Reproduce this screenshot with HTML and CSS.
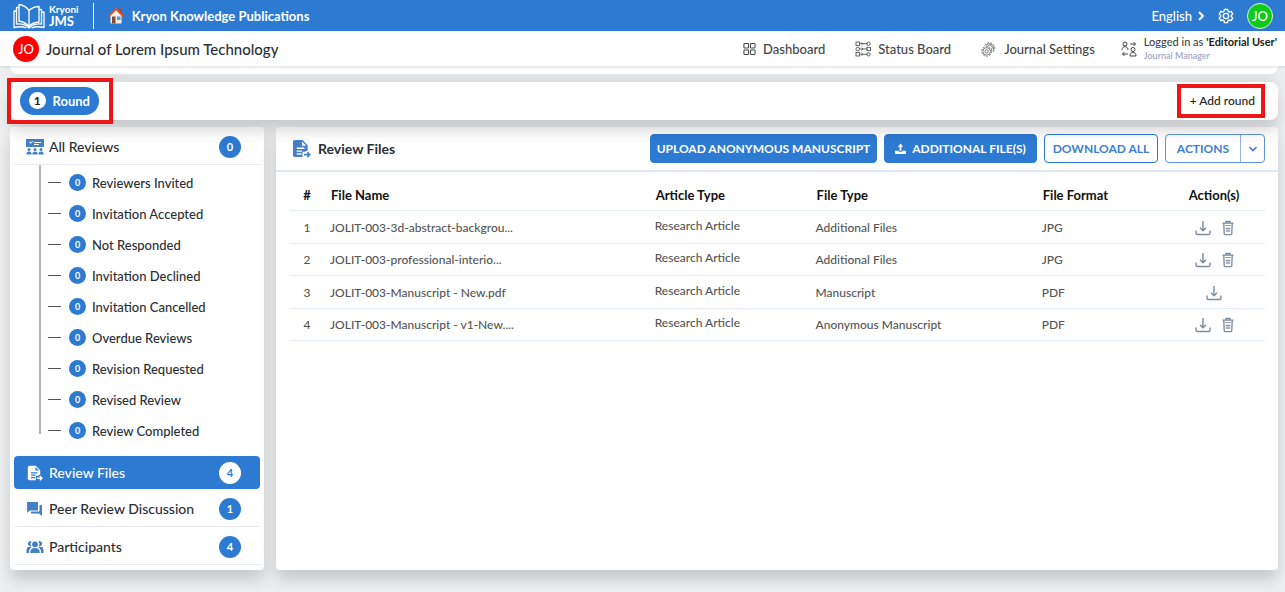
FILE: index.html
```html
<!DOCTYPE html>
<html lang="en">
<head>
<meta charset="utf-8">
<meta name="viewport" content="width=device-width, initial-scale=1">
<title>Journal of Lorem Ipsum Technology</title>
<link rel="stylesheet" href="styles.css">
</head>
<body>
<svg class="defs" aria-hidden="true">
  <symbol id="file" viewBox="0 0 20 20"><path fill="currentColor" fill-rule="evenodd" d="M3 1h8l5.500 5.500V12l-3 1.500H11V19H3a2 2 0 0 1-2-2V3a2 2 0 0 1 2-2zM10.500 2.500V7H15zM5 9v1.500h8V9zM5 12v1.500h5.500V12zM5 15v1.500h5V15z"/><path d="M12.500 16.500h5.500M16 13.800l2.700 2.700-2.700 2.700" fill="none" stroke="currentColor" stroke-width="1.700"/></symbol>
  <symbol id="download" viewBox="0 0 16 16"><path d="M8 1v9.500M5 7.800l3 3 3-3M1 10.500V13a1.500 1.500 0 0 0 1.500 1.500h11A1.500 1.500 0 0 0 15 13v-2.500" fill="none" stroke="currentColor" stroke-width="1.400"/></symbol>
  <symbol id="trash" viewBox="0 0 12 16"><path d="M.5 3.200h11M4 2.800V1.500h4v1.300M1.800 3.500l.4 10a1.200 1.200 0 0 0 1.200 1.200h5.200a1.200 1.200 0 0 0 1.200-1.200l.4-10" fill="none" stroke="currentColor" stroke-width="1.300"/><path d="M3 5.500h6M3.500 8.500h5M3.500 11h5M5 7.500v4.500M7 7.500v4.500" fill="none" stroke="currentColor" stroke-width=".8"/></symbol>
  <symbol id="gear" viewBox="0 0 24 24"><path d="M9.600 2h4.800l.7 3 1.700 1 3-.9 2.300 4.100-2.200 2.100v1.400l2.200 2.100-2.300 4.100-3-.9-1.700 1-.7 3H9.600l-.7-3-1.700-1-3 .9-2.300-4.100 2.200-2.100v-1.400L1.900 9.200l2.300-4.100 3 .9 1.700-1z" fill="none" stroke="currentColor" stroke-linejoin="round"/><circle cx="12" cy="12" r="4" fill="none" stroke="currentColor"/></symbol>
</svg>

<header class="topbar">
  <a class="brand" href="#">
    <svg class="book" viewBox="0 0 32 26" aria-hidden="true"><g fill="none" stroke="#fff" stroke-width="1.300" stroke-linejoin="round"><path d="M16 23.500V7.500C13.500 4 10 2 6 1.500V18c4 .8 7.500 2.500 10 5.500zM16 7.500C18.500 5 22 3.700 26 3.500V19c-4 .2-7.500 1.500-10 4.500"/><path d="M6 4.500H3.500V21c5-.3 9.500.8 12.500 4 3-3.200 7.500-4.300 12.500-4V6.500H26M3.500 8H1v16.500c5-1.200 9-1 12.500.5M28.500 9H31v15.500c-5-1.200-9-1-12.500.5"/></g></svg>
    <span class="brand-text"><span class="brand-top">Kryoni</span><span class="brand-bottom">JMS</span></span>
  </a>
  <a class="publisher" href="#">
    <svg class="house" viewBox="0 0 16 17" aria-hidden="true"><path fill="#f4f1ee" d="M2.500 8L8 2.800 13.500 8v8.500h-11z"/><path fill="#8a4b32" d="M4 9.500h3.500v7H4z"/><path fill="#4b9bd8" d="M9 9.500h3.500v3.500H9z"/><path fill="#a34527" d="M11.500 1.500h2V6h-2z"/><path d="M1.200 8.800L8 1.900l6.800 6.900" fill="none" stroke="#ea4d1e" stroke-width="2" stroke-linecap="round" stroke-linejoin="round"/></svg>
    Kryon Knowledge Publications
  </a>
  <div class="top-actions">
    <button class="language" type="button">English <svg viewBox="0 0 8 10" aria-hidden="true"><path d="M2 1l4 4-4 4" fill="none" stroke="currentColor" stroke-width="2"/></svg></button>
    <button class="plain settings" type="button" aria-label="Settings"><svg><use href="#gear"/></svg></button>
    <button class="avatar avatar-user" type="button">JO</button>
  </div>
</header>

<nav class="subbar">
  <span class="avatar avatar-journal">JO</span>
  <h1 class="journal">Journal of Lorem Ipsum Technology</h1>
  <div class="menu">
    <a href="#"><svg class="ic-dash" viewBox="0 0 14 14" aria-hidden="true"><g fill="none" stroke="currentColor" stroke-width="1.100"><rect x="1" y="1" width="5" height="5" rx="1"/><rect x="8" y="1" width="5" height="5" rx="1"/><rect x="1" y="8" width="5" height="5" rx="1"/><rect x="8" y="8" width="5" height="5" rx="1"/></g></svg>Dashboard</a>
    <a href="#"><svg class="ic-board" viewBox="0 0 16 16" aria-hidden="true"><g fill="none" stroke="currentColor" stroke-width=".8"><rect x="1" y="1" width="3.500" height="3.500"/><circle cx="2.700" cy="8" r="1.800"/><rect x="1" y="11.500" width="3.500" height="3.500"/><path d="M4.500 2.700h8M4.500 8h8M4.500 13.300h8M6.500 1.500l1.500 1.200-1.500 1.200M6.500 6.800L8 8 6.500 9.200M6.500 12.100L8 13.300l-1.500 1.200"/><circle cx="13.500" cy="2.700" r="1.700"/><rect x="12" y="6.300" width="3.400" height="3.400"/><circle cx="13.500" cy="13.300" r="1.700"/></g></svg>Status Board</a>
    <a href="#"><svg class="ic-gears" viewBox="0 0 34 34" aria-hidden="true"><g fill="none" stroke="currentColor" stroke-width="1.500"><circle cx="12" cy="22" r="8"/><circle cx="12" cy="22" r="3.500"/><circle cx="12" cy="22" r="10.500" stroke-dasharray="4 2.600"/><path d="M10.500 9.500A9 9 0 1 1 25 20.500M14 10.500a5.500 5.500 0 1 1 8.500 7"/><path d="M8 9A11.500 11.500 0 1 1 25 24" stroke-dasharray="4 2.600"/></g></svg>Journal Settings</a>
    <a class="who" href="#"><svg class="ic-swap" viewBox="0 0 16 16" aria-hidden="true"><g fill="none" stroke="currentColor" stroke-width="1"><circle cx="4" cy="3" r="2"/><path d="M1 9c0-4.500 6-4.500 6 0"/><circle cx="12" cy="8.500" r="2"/><path d="M9 15c0-5 6-5 6 0zM9 3h5.500M12.500 1l2 2-2 2M7 13H1.500M3.500 11l-2 2 2 2"/></g></svg><span class="who-text"><span>Logged in as <b>'Editorial User'</b></span><small>Journal Manager</small></span></a>
  </div>
</nav>

<main class="page">
  <div class="card strip"></div>
  <section class="card rounds">
    <div class="mark mark-round"><button class="round" type="button"><span class="round-no">1</span>Round</button></div>
    <div class="mark mark-add"><button class="plain add" type="button">+ Add round</button></div>
  </section>

  <div class="columns">
    <aside class="card side">
      <a class="side-row" href="#"><svg class="side-icon" viewBox="0 0 18 16" aria-hidden="true"><g fill="currentColor"><path fill-rule="evenodd" d="M0 0h18v8H0zM3 3l1.500 1.700L7 2.500l-.6-.6-1.900 1.700-.8-1zM8 3v1h7V3zM8 5v1h5V5z"/><circle cx="3" cy="10.500" r="1.500"/><circle cx="9" cy="10.500" r="1.500"/><circle cx="15" cy="10.500" r="1.500"/><path d="M.3 15.500q0-3 2.700-3t2.700 3zM6.300 15.500q0-3 2.700-3t2.700 3zM12.300 15.500q0-3 2.700-3t2.700 3z"/></g></svg>All Reviews<span class="badge">0</span></a>
      <ul class="tree">
        <li><a href="#"><span class="dot">0</span>Reviewers Invited</a></li>
        <li><a href="#"><span class="dot">0</span>Invitation Accepted</a></li>
        <li><a href="#"><span class="dot">0</span>Not Responded</a></li>
        <li><a href="#"><span class="dot">0</span>Invitation Declined</a></li>
        <li><a href="#"><span class="dot">0</span>Invitation Cancelled</a></li>
        <li><a href="#"><span class="dot">0</span>Overdue Reviews</a></li>
        <li><a href="#"><span class="dot">0</span>Revision Requested</a></li>
        <li><a href="#"><span class="dot">0</span>Revised Review</a></li>
        <li><a href="#"><span class="dot">0</span>Review Completed</a></li>
      </ul>
      <a class="side-row active" href="#"><svg class="side-icon" aria-hidden="true"><use href="#file"/></svg>Review Files<span class="badge">4</span></a>
      <a class="side-row" href="#"><svg class="side-icon" viewBox="0 0 18 16" aria-hidden="true"><path fill="currentColor" d="M1 1h11v8.500H4L1.200 12zM13.500 4H16v11l-3-2.500H5v-2h8.500z"/></svg>Peer Review Discussion<span class="badge">1</span></a>
      <a class="side-row" href="#"><svg class="side-icon" viewBox="0 0 18 16" aria-hidden="true"><g fill="currentColor"><circle cx="9" cy="5.300" r="2.900"/><path d="M4.200 14q0-5 4.800-5t4.800 5z"/><path d="M5.500 2.200a2.700 2.700 0 1 0-.2 5.100 4.500 4.500 0 0 1 .2-5.100zM12.500 2.200a2.700 2.700 0 1 1 .2 5.100 4.500 4.500 0 0 0-.2-5.100zM1.500 8H5.500q-2.500 2-2.500 6H.5q-.2-4 1-6zM16.500 8h-4q2.500 2 2.500 6h2.500q.2-4-1-6z"/></g></svg>Participants<span class="badge">4</span></a>
    </aside>

    <section class="card files">
      <div class="files-head">
        <svg class="title-icon" aria-hidden="true"><use href="#file"/></svg>
        <h2>Review Files</h2>
        <div class="buttons">
          <button class="btn solid upload" type="button">UPLOAD ANONYMOUS MANUSCRIPT</button>
          <button class="btn solid additional" type="button"><svg viewBox="0 0 12 12" aria-hidden="true"><path fill="currentColor" d="M6 0l3 3.500H7V8H5V3.500H3zM0 8h4v1h4V8h4v3.500H0z"/></svg>ADDITIONAL FILE(S)</button>
          <button class="btn outline download" type="button">DOWNLOAD ALL</button>
          <div class="split">
            <button type="button">ACTIONS</button>
            <button class="caret" type="button" aria-label="More actions"><svg viewBox="0 0 10 8" aria-hidden="true"><path d="M1.500 2L5 5.500 8.500 2" fill="none" stroke="currentColor" stroke-width="1.600"/></svg></button>
          </div>
        </div>
      </div>
      <table>
        <colgroup><col class="c-no"><col class="c-name"><col class="c-article"><col class="c-type"><col class="c-format"><col class="c-act"></colgroup>
        <thead><tr><th class="mid">#</th><th>File Name</th><th>Article Type</th><th>File Type</th><th>File Format</th><th class="mid">Action(s)</th></tr></thead>
        <tbody>
          <tr><td class="mid">1</td><td>JOLIT-003-3d-abstract-backgrou...</td><td class="article">Research Article</td><td>Additional Files</td><td>JPG</td><td><div class="acts"><button class="plain" type="button" aria-label="Download"><svg class="dl"><use href="#download"/></svg></button><button class="plain" type="button" aria-label="Delete"><svg class="bin"><use href="#trash"/></svg></button></div></td></tr>
          <tr><td class="mid">2</td><td>JOLIT-003-professional-interio...</td><td class="article">Research Article</td><td>Additional Files</td><td>JPG</td><td><div class="acts"><button class="plain" type="button" aria-label="Download"><svg class="dl"><use href="#download"/></svg></button><button class="plain" type="button" aria-label="Delete"><svg class="bin"><use href="#trash"/></svg></button></div></td></tr>
          <tr><td class="mid">3</td><td>JOLIT-003-Manuscript - New.pdf</td><td class="article">Research Article</td><td>Manuscript</td><td>PDF</td><td><div class="acts"><button class="plain" type="button" aria-label="Download"><svg class="dl"><use href="#download"/></svg></button></div></td></tr>
          <tr><td class="mid">4</td><td>JOLIT-003-Manuscript - v1-New....</td><td class="article">Research Article</td><td>Anonymous Manuscript</td><td>PDF</td><td><div class="acts"><button class="plain" type="button" aria-label="Download"><svg class="dl"><use href="#download"/></svg></button><button class="plain" type="button" aria-label="Delete"><svg class="bin"><use href="#trash"/></svg></button></div></td></tr>
        </tbody>
      </table>
    </section>
  </div>
</main>
</body>
</html>
```
FILE: styles.css
```css
:root { --blue: #2d7ad3; --ink: #2b3035; --line: #e4eaf3; }
* { box-sizing: border-box; }
body { margin: 0; min-height: 100vh; display: flex; flex-direction: column; background: #eff0f2; color: var(--ink); font: 500 13px/18px Lato, sans-serif; }
button { font: inherit; color: inherit; cursor: pointer; }
a { color: inherit; text-decoration: none; }
h1, h2, ul { margin: 0; padding: 0; }
svg { display: block; flex: none; }
.defs { position: absolute; width: 0; height: 0; }
.plain { border: 0; padding: 0; background: none; }

.topbar { display: flex; align-items: center; height: 31px; padding: 0 12px 0 13px; background: var(--blue); color: #fff; }
.brand { display: flex; align-items: center; gap: 4px; padding-right: 14px; border-right: 1px solid #fff; height: 26px; }
.book { width: 32px; height: 26px; }
.brand-text { display: flex; flex-direction: column; font-weight: 700; }
.brand-top { font-size: 10px; line-height: 11px; }
.brand-bottom { font-size: 13px; line-height: 13px; }
.publisher { display: flex; align-items: center; gap: 8px; margin-left: 14px; font-size: 13px; font-weight: 700; }
.house { width: 16px; height: 17px; }
.top-actions { display: flex; align-items: center; margin-left: auto; }
.language { display: flex; align-items: center; gap: 5px; border: 0; padding: 0; background: none; font-size: 13px; }
.language svg { width: 8px; height: 10px; }
.settings { margin: 0 13px; }
.settings svg { width: 16px; height: 16px; stroke-width: 2; }
.avatar { display: grid; place-items: center; width: 26px; height: 26px; border-radius: 50%; color: #fff; font-size: 13px; line-height: 18px; padding: 0; }
.avatar-user { border: 1px solid #dff5df; background: #0fca16; }
.avatar-journal { background: #f00; }

.subbar { position: relative; z-index: 2; display: flex; align-items: center; height: 35px; padding: 0 8px 0 13px; background: #fff; box-shadow: 0 1px 3px #0002; }
.journal { margin-left: 7px; font-size: 15px; font-weight: 500; }
.menu { display: flex; align-items: center; margin-left: auto; color: #444; }
.menu a { display: flex; align-items: center; gap: 7px; margin-left: 30px; }
.menu .who { gap: 7px; margin-left: 26px; }
.ic-dash { width: 13px; height: 14px; }
.ic-board, .ic-gears, .ic-swap { width: 16px; height: 16px; }
.who-text { display: flex; flex-direction: column; font-size: 11px; line-height: 14px; }
.who b { color: #222; }
.who small { color: #9aa2b8; font-size: 9px; line-height: 13px; }

.page { flex: 1; display: flex; flex-direction: column; padding: 0 7px 23px 10px; }
.card { background: #fff; box-shadow: 0 10px 16px #0000002b; }
.strip { height: 8px; border-radius: 0 0 12px 12px; }
.rounds { position: relative; z-index: 1; display: flex; justify-content: space-between; align-items: center; height: 38px; margin: 8px 0 7px; padding: 0 13px 0 0; border-radius: 8px; }
.mark { border: 4px solid #ed1616; }
.mark-round { margin: -5px 0 -4px -3px; padding: 5px 10px 5px 9px; }
.mark-add { padding: 3px 6px 4px 9px; }
.round { display: flex; align-items: center; gap: 7px; width: 79px; height: 28px; padding: 0 9px; border: 0; border-radius: 14px; background: var(--blue); color: #fff; font-weight: 700; }
.round-no { display: grid; place-items: center; width: 17px; height: 17px; border-radius: 50%; background: #fff; color: #222; font-size: 12px; }
.add { color: #222; font-size: 12px; }

.columns { flex: 1; display: grid; grid-template-columns: 254px 1fr; gap: 12px; }
.side { padding: 0 4px 5px; border-radius: 4px; }
.side-row { display: flex; align-items: center; gap: 5px; height: 38px; padding: 2px 19px 0 12px; border-bottom: 1px solid #eaecef; font-size: 14px; }
.side-icon { width: 18px; height: 16px; color: #4580c7; }
.side-row.active { height: 33px; margin-top: 10px; padding-top: 0; border: 0; border-radius: 4px; background: var(--blue); color: #fff; }
.active .side-icon { color: #fff; }
.badge { display: grid; place-items: center; width: 22px; height: 22px; margin-left: auto; border-radius: 50%; background: var(--blue); color: #fff; font-size: 11px; font-weight: 700; }
.active .badge { background: #fff; color: var(--blue); }
.tree { list-style: none; margin-left: 25px; padding-top: 2px; background: linear-gradient(#b5b5b5, #b5b5b5) 0 0 / 2px calc(100% - 12px) no-repeat; }
.tree a { display: flex; align-items: center; height: 31px; padding-left: 9px; }
.tree a::before { content: ""; width: 13px; height: 1px; margin-right: 8px; background: #555; }
.dot { display: grid; place-items: center; width: 17px; height: 17px; margin-right: 6px; border-radius: 50%; background: var(--blue); color: #fff; font-size: 9px; font-weight: 700; }

.files { border-radius: 4px; }
.files-head { display: flex; align-items: center; min-height: 45px; padding: 0 13px 0 16px; border-bottom: 2px solid #e1e7ef; }
.title-icon { width: 19px; height: 19px; color: #4580c7; }
h2 { margin-left: 7px; font-size: 14px; font-weight: 700; line-height: 18px; }
.buttons { display: flex; gap: 7px; margin-left: auto; font-size: 12px; font-weight: 700; }
.btn { display: flex; align-items: center; justify-content: center; gap: 6px; height: 29px; padding: 0; border: 1px solid var(--blue); border-radius: 4px; }
.solid { background: var(--blue); color: #fff; }
.outline, .split { background: #fff; color: #3d7fd0; }
.upload { min-width: 227px; }
.additional { min-width: 153px; }
.additional svg { width: 11px; height: 12px; }
.download { min-width: 114px; }
.split { display: flex; height: 29px; border: 1px solid #5b95dc; border-radius: 4px; }
.split button { width: 74px; padding: 0; border: 0; background: none; }
.split .caret { display: grid; place-items: center; width: 24px; border-left: 1px solid #8db5e8; }
.caret svg { width: 10px; height: 8px; }

table { width: calc(100% - 27px); margin: 8px 13px 0 14px; border-collapse: collapse; table-layout: fixed; color: #555; font-size: 12px; line-height: 16px; }
.c-no { width: 34px; }
.c-name { width: 33.3%; }
.c-article { width: 16.5%; }
.c-type { width: 23.2%; }
.c-act { width: 102px; }
th { height: 30px; padding: 1px 7px 0; color: #111; font-size: 13px; font-weight: 700; text-align: left; }
td { height: 33px; padding: 2px 6px 0; }
tr:nth-child(even) td { height: 32px; }
tr { border-bottom: 1px solid var(--line); }
.article { padding: 0 6px 2px; }
.mid { padding-inline: 0; text-align: center; }
.acts { display: flex; justify-content: center; gap: 11px; color: #7d8a9f; }
.dl { width: 16px; height: 16px; }
.bin { width: 12px; height: 16px; }
```
